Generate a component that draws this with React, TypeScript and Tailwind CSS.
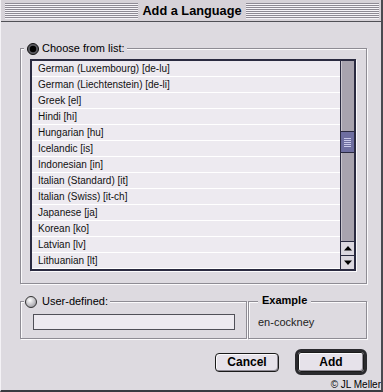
import React from "react";

const items = [
  "German (Luxembourg) [de-lu]",
  "German (Liechtenstein) [de-li]",
  "Greek [el]",
  "Hindi [hi]",
  "Hungarian [hu]",
  "Icelandic [is]",
  "Indonesian [in]",
  "Italian (Standard) [it]",
  "Italian (Swiss) [it-ch]",
  "Japanese [ja]",
  "Korean [ko]",
  "Latvian [lv]",
  "Lithuanian [lt]",
];

function Radio({ on }: { on: boolean }) {
  return (
    <svg width="12" height="12" viewBox="0 0 12 12">
      <defs>
        <radialGradient id="rg" cx="40%" cy="35%" r="70%">
          <stop offset="0%" stopColor="#ffffff" />
          <stop offset="100%" stopColor="#9a98a0" />
        </radialGradient>
      </defs>
      {on ? (
        <>
          <circle cx="6" cy="6" r="5.5" fill="#5a5a60" stroke="#111" strokeWidth="1" />
          <circle cx="6" cy="6" r="3.2" fill="#000" />
        </>
      ) : (
        <circle cx="6" cy="6" r="5.5" fill="url(#rg)" stroke="#333" strokeWidth="1" />
      )}
    </svg>
  );
}

export default function App() {
  return (
    <div
      className="relative w-[383px] h-[392px] overflow-hidden bg-[#dddae0] border-l border-l-[#f4f2f6] border-r-2 border-r-[#4a4a50] border-b-2 border-b-[#3a3a40] flex flex-col"
      style={{ fontFamily: '"Liberation Sans", Arial, sans-serif' }}
    >
      {/* Title bar */}
      <div className="h-[22px] shrink-0 bg-[#d6d2d8] border-b border-b-[#505056] pt-[3px] pl-[4px] pr-[2px]">
        <div className="h-[16px] flex items-center justify-center bg-[repeating-linear-gradient(to_bottom,#8e8a94_0px,#8e8a94_1px,#f6f4f8_1px,#f6f4f8_2px)]">
          <div className="bg-[#d6d2d8] h-[16px] px-[4px] flex items-center text-[12.75px] font-bold text-black leading-none">
            Add a Language
          </div>
        </div>
      </div>

      {/* Content */}
      <div className="flex flex-col pl-[19px] pr-[14px] pt-[26px]">
        {/* Group 1 */}
        <div className="relative h-[236px] border border-[#8e8c94] shadow-[inset_1px_1px_0_#fbfafc,1px_1px_0_#fbfafc] pl-[9px] pr-[10px] pt-[10px]">
          <div className="absolute left-[3px] top-[-8px] bg-[#dddae0] flex items-center gap-[3px] pl-[3px] pr-[2px] h-[15px]">
            <Radio on />
            <span className="text-[11px] text-black leading-none">Choose from list:</span>
          </div>
          <div className="h-[212px] border-2 border-[#2a2a40] bg-[#edeaf0] flex shadow-[1px_1px_0_#fbfafc]">
            <div className="flex-1 flex flex-col">
              {items.map((t) => (
                <div
                  key={t}
                  className="h-[16px] border-b border-b-white flex items-center pl-[6px] text-[10px] text-[#111] leading-none"
                >
                  {t}
                </div>
              ))}
            </div>
            <div className="w-[14px] flex flex-col border-l border-l-[#2a2a40] bg-[#a8a3ae]">
              <div className="h-[70px] border-l border-l-[#c8c4cc]" />
              <div className="h-[22px] bg-[#6e6ea0] border-y border-y-[#2a2a40] flex flex-col items-center justify-center gap-[1px]">
                {[0, 1, 2, 3, 4].map((i) => (
                  <div key={i} className="w-[7px] h-[1px] bg-[#c8c8e8]" />
                ))}
              </div>
              <div className="flex-1 border-l border-l-[#c8c4cc]" />
              <div className="h-[14px] bg-[#dcd8e0] border-t border-t-[#2a2a40] flex items-center justify-center">
                <svg width="8" height="5" viewBox="0 0 8 5">
                  <polygon points="4,0 8,4.5 0,4.5" fill="#000" />
                </svg>
              </div>
              <div className="h-[14px] bg-[#dcd8e0] border-t border-t-[#2a2a40] flex items-center justify-center">
                <svg width="8" height="5" viewBox="0 0 8 5">
                  <polygon points="0,0.5 8,0.5 4,5" fill="#000" />
                </svg>
              </div>
            </div>
          </div>
        </div>

        {/* Group 2 row */}
        <div className="flex mt-[17px] gap-[1px]">
          <div className="relative w-[227px] h-[38px] border border-[#8e8c94] shadow-[inset_1px_1px_0_#fbfafc,1px_1px_0_#fbfafc] pl-[12px] pt-[12px]">
            <div className="absolute left-[3px] top-[-8px] bg-[#dddae0] flex items-center gap-[5px] pl-[1px] pr-[2px] h-[15px]">
              <Radio on={false} />
              <span className="text-[11px] text-black leading-none">User-defined:</span>
            </div>
            <div className="w-[202px] h-[16px] border border-[#505058] bg-[#edeaf0]" />
          </div>
          <div className="relative flex-1 h-[38px] border border-[#8e8c94] shadow-[inset_1px_1px_0_#fbfafc,1px_1px_0_#fbfafc] pl-[9px] pt-[7px]">
            <div className="absolute left-[9px] top-[-9px] bg-[#dddae0] px-[4px] h-[15px] flex items-center">
              <span className="text-[11px] font-bold text-black leading-none">Example</span>
            </div>
            <span className="text-[11px] text-[#222] leading-none">en-cockney</span>
          </div>
        </div>

        {/* Buttons */}
        <div className="flex justify-end items-center gap-[16px] mt-[10px] h-[26px]">
          <div className="w-[64px] h-[19px] rounded-[4px] border border-[#1a1a1a] bg-[#e6e2ea] shadow-[inset_-1px_-1px_0_#8e8a94,inset_1px_1px_0_#fbfafc] flex items-center justify-center text-[12px] font-bold text-black leading-none">
            Cancel
          </div>
          <div className="w-[72px] h-[26px] rounded-[6px] border-[3px] border-[#2a2a2e] bg-[#bcb8c0] flex items-center justify-center p-0">
            <div className="w-full h-full rounded-[3px] border border-[#1a1a1a] bg-[#e6e2ea] shadow-[inset_-1px_-1px_0_#8e8a94,inset_1px_1px_0_#fbfafc] flex items-center justify-center text-[12px] font-bold text-black leading-none">
              Add
            </div>
          </div>
        </div>
      </div>

      <div className="absolute right-[0px] bottom-[0px] text-[10px] text-black leading-none whitespace-nowrap">
        © JL Meller
      </div>
    </div>
  );
}
